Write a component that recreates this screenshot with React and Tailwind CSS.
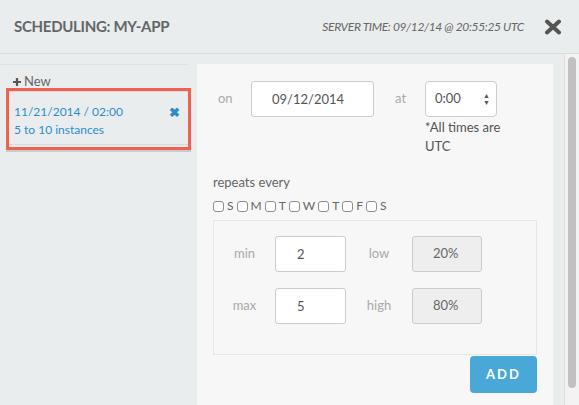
import { useState } from "react";

const DAYS = ["S", "M", "T", "W", "T", "F", "S"];

function CloseIcon({ className }) {
  return (
    <svg className={className} viewBox="0 0 18 16" fill="none" stroke="currentColor" strokeWidth={4} strokeLinecap="round">
      <path d="M3 2.5l12 11M15 2.5l-12 11" />
    </svg>
  );
}

function PlusIcon({ className }) {
  return (
    <svg className={className} viewBox="0 0 10 10" fill="currentColor">
      <rect x="3.6" y="0" width="2.8" height="10" rx="0.6" />
      <rect x="0" y="3.6" width="10" height="2.8" rx="0.6" />
    </svg>
  );
}

function DayBox({ label }) {
  return (
    <label className="flex items-center gap-[3px] mr-[3px]">
      <span className="w-[11px] h-[11px] rounded-[3px] border border-[#8f8f8f] bg-white" />
      <span className="text-[12px] text-[#666]">{label}</span>
    </label>
  );
}

export default function App() {
  const [min, setMin] = useState("2");
  const [max, setMax] = useState("5");

  return (
    <div className="w-[579px] h-[405px] overflow-hidden bg-[#e9edee] font-['Lato',sans-serif] flex flex-col">
      {/* Header */}
      <div className="h-[54px] shrink-0 border-b border-[#dadedf] flex items-center pl-[14px] pr-[17px]">
        <h1 className="text-[15px] font-bold text-[#636667] tracking-[-0.3px] flex-1">SCHEDULING: MY-APP</h1>
        <span className="text-[12px] italic text-[#666] tracking-[-0.35px] mr-[20px]">SERVER TIME: 09/12/14 @ 20:55:25 UTC</span>
        <CloseIcon className="w-[18px] h-[16px] text-[#555]" />
      </div>

      {/* Body */}
      <div className="flex flex-1 min-h-0">
        {/* Sidebar */}
        <div className="w-[197px] shrink-0 pt-[10px]">
          <div className="w-[187px] border-t border-[#dde1e2] pt-[9px]">
            <div className="flex items-center gap-[3px] pl-[13px] text-[13px] text-[#666] h-[16px]">
              <PlusIcon className="w-[8px] h-[8px] text-[#555]" />New
            </div>
          </div>
          <div className="mx-[6px] -mt-[2px] border-[3px] border-[#f0624f] shadow-[0_2px_0_#c9cccd] w-[185px] pb-[2px]">
            <div className="border-t border-b border-[#d5d9da] px-[5px] pt-[11px] pb-[5px] text-[12px] text-[#2e8bcb] leading-[18px]">
              <div className="flex justify-between items-center">
                <span>11/21/2014 / 02:00</span>
                <span className="font-black text-[13px] mr-[3px]">✖</span>
              </div>
              <div>5 to 10 instances</div>
            </div>
          </div>
        </div>

        {/* Panel */}
        <div className="w-[356px] mt-[10px] bg-[#f7f7f7] pt-[17px] px-[16px] flex flex-col">
          <div className="flex items-start">
            <span className="ml-[5px] w-[33px] h-[36px] flex items-center text-[13px] text-[#a9a9a9]">on</span>
            <input
              readOnly
              value="09/12/2014"
              className="w-[123px] h-[36px] rounded-[3px] border border-[#cccccc] bg-white pl-[20px] text-[13px] text-[#555] outline-none"
            />
            <span className="ml-[21px] w-[30px] h-[36px] flex items-center text-[13px] text-[#a9a9a9]">at</span>
            <div className="flex flex-col">
              <div className="w-[72px] h-[36px] rounded-[4px] border border-[#cccccc] bg-white flex items-center justify-between pl-[9px] pr-[6px]">
                <span className="text-[13px] text-[#555]">0:00</span>
                <span className="flex flex-col text-[#555] text-[7px] leading-[7px]">
                  <span>▲</span>
                  <span>▼</span>
                </span>
              </div>
              <p className="text-[13px] text-[#555] leading-[19px] mt-[1px]">*All times are<br />UTC</p>
            </div>
          </div>

          <p className="mt-[17px] text-[13px] text-[#666] leading-[18px]">repeats every</p>
          <div className="flex items-center mt-[6px] h-[18px]">
            {DAYS.map((d, i) => <DayBox key={i} label={d} />)}
          </div>

          <div className="mt-[5px] w-[324px] border border-[#e6e6e6] pt-[15px] pb-[30px]">
            <div className="grid grid-cols-[61px_71px_66px_70px] gap-y-[16px] items-center">
              <span className="text-center text-[13px] text-[#a9a9a9]">min</span>
              <input value={min} onChange={e => setMin(e.target.value)}
                className="h-[36px] rounded-[3px] border border-[#cccccc] bg-white pl-[21px] text-[13px] text-[#555] outline-none" />
              <span className="text-center text-[13px] text-[#a9a9a9]">low</span>
              <div className="h-[36px] rounded-[3px] border border-[#cccccc] bg-[#eeeeee] flex items-center pl-[20px] text-[13px] text-[#666]">20%</div>

              <span className="text-center text-[13px] text-[#a9a9a9]">max</span>
              <input value={max} onChange={e => setMax(e.target.value)}
                className="h-[36px] rounded-[3px] border border-[#cccccc] bg-white pl-[21px] text-[13px] text-[#555] outline-none" />
              <span className="text-center text-[13px] text-[#a9a9a9]">high</span>
              <div className="h-[36px] rounded-[3px] border border-[#cccccc] bg-[#eeeeee] flex items-center pl-[20px] text-[13px] text-[#666]">80%</div>
            </div>
          </div>

          <div className="flex justify-end w-[324px]">
            <button className="mt-[1px] w-[67px] h-[37px] rounded-[4px] bg-[#4aa8d8] text-white text-[13px] font-bold tracking-[2px]">ADD</button>
          </div>
        </div>

        {/* Scrollbar */}
        <div className="ml-[11px] w-[15px] bg-[#f3f3f3] border-l border-[#e0e0e0] pt-[3px]">
          <div className="ml-[3px] w-[8px] h-[331px] rounded-full bg-[#c1c1c1]" />
        </div>
      </div>
    </div>
  );
}
